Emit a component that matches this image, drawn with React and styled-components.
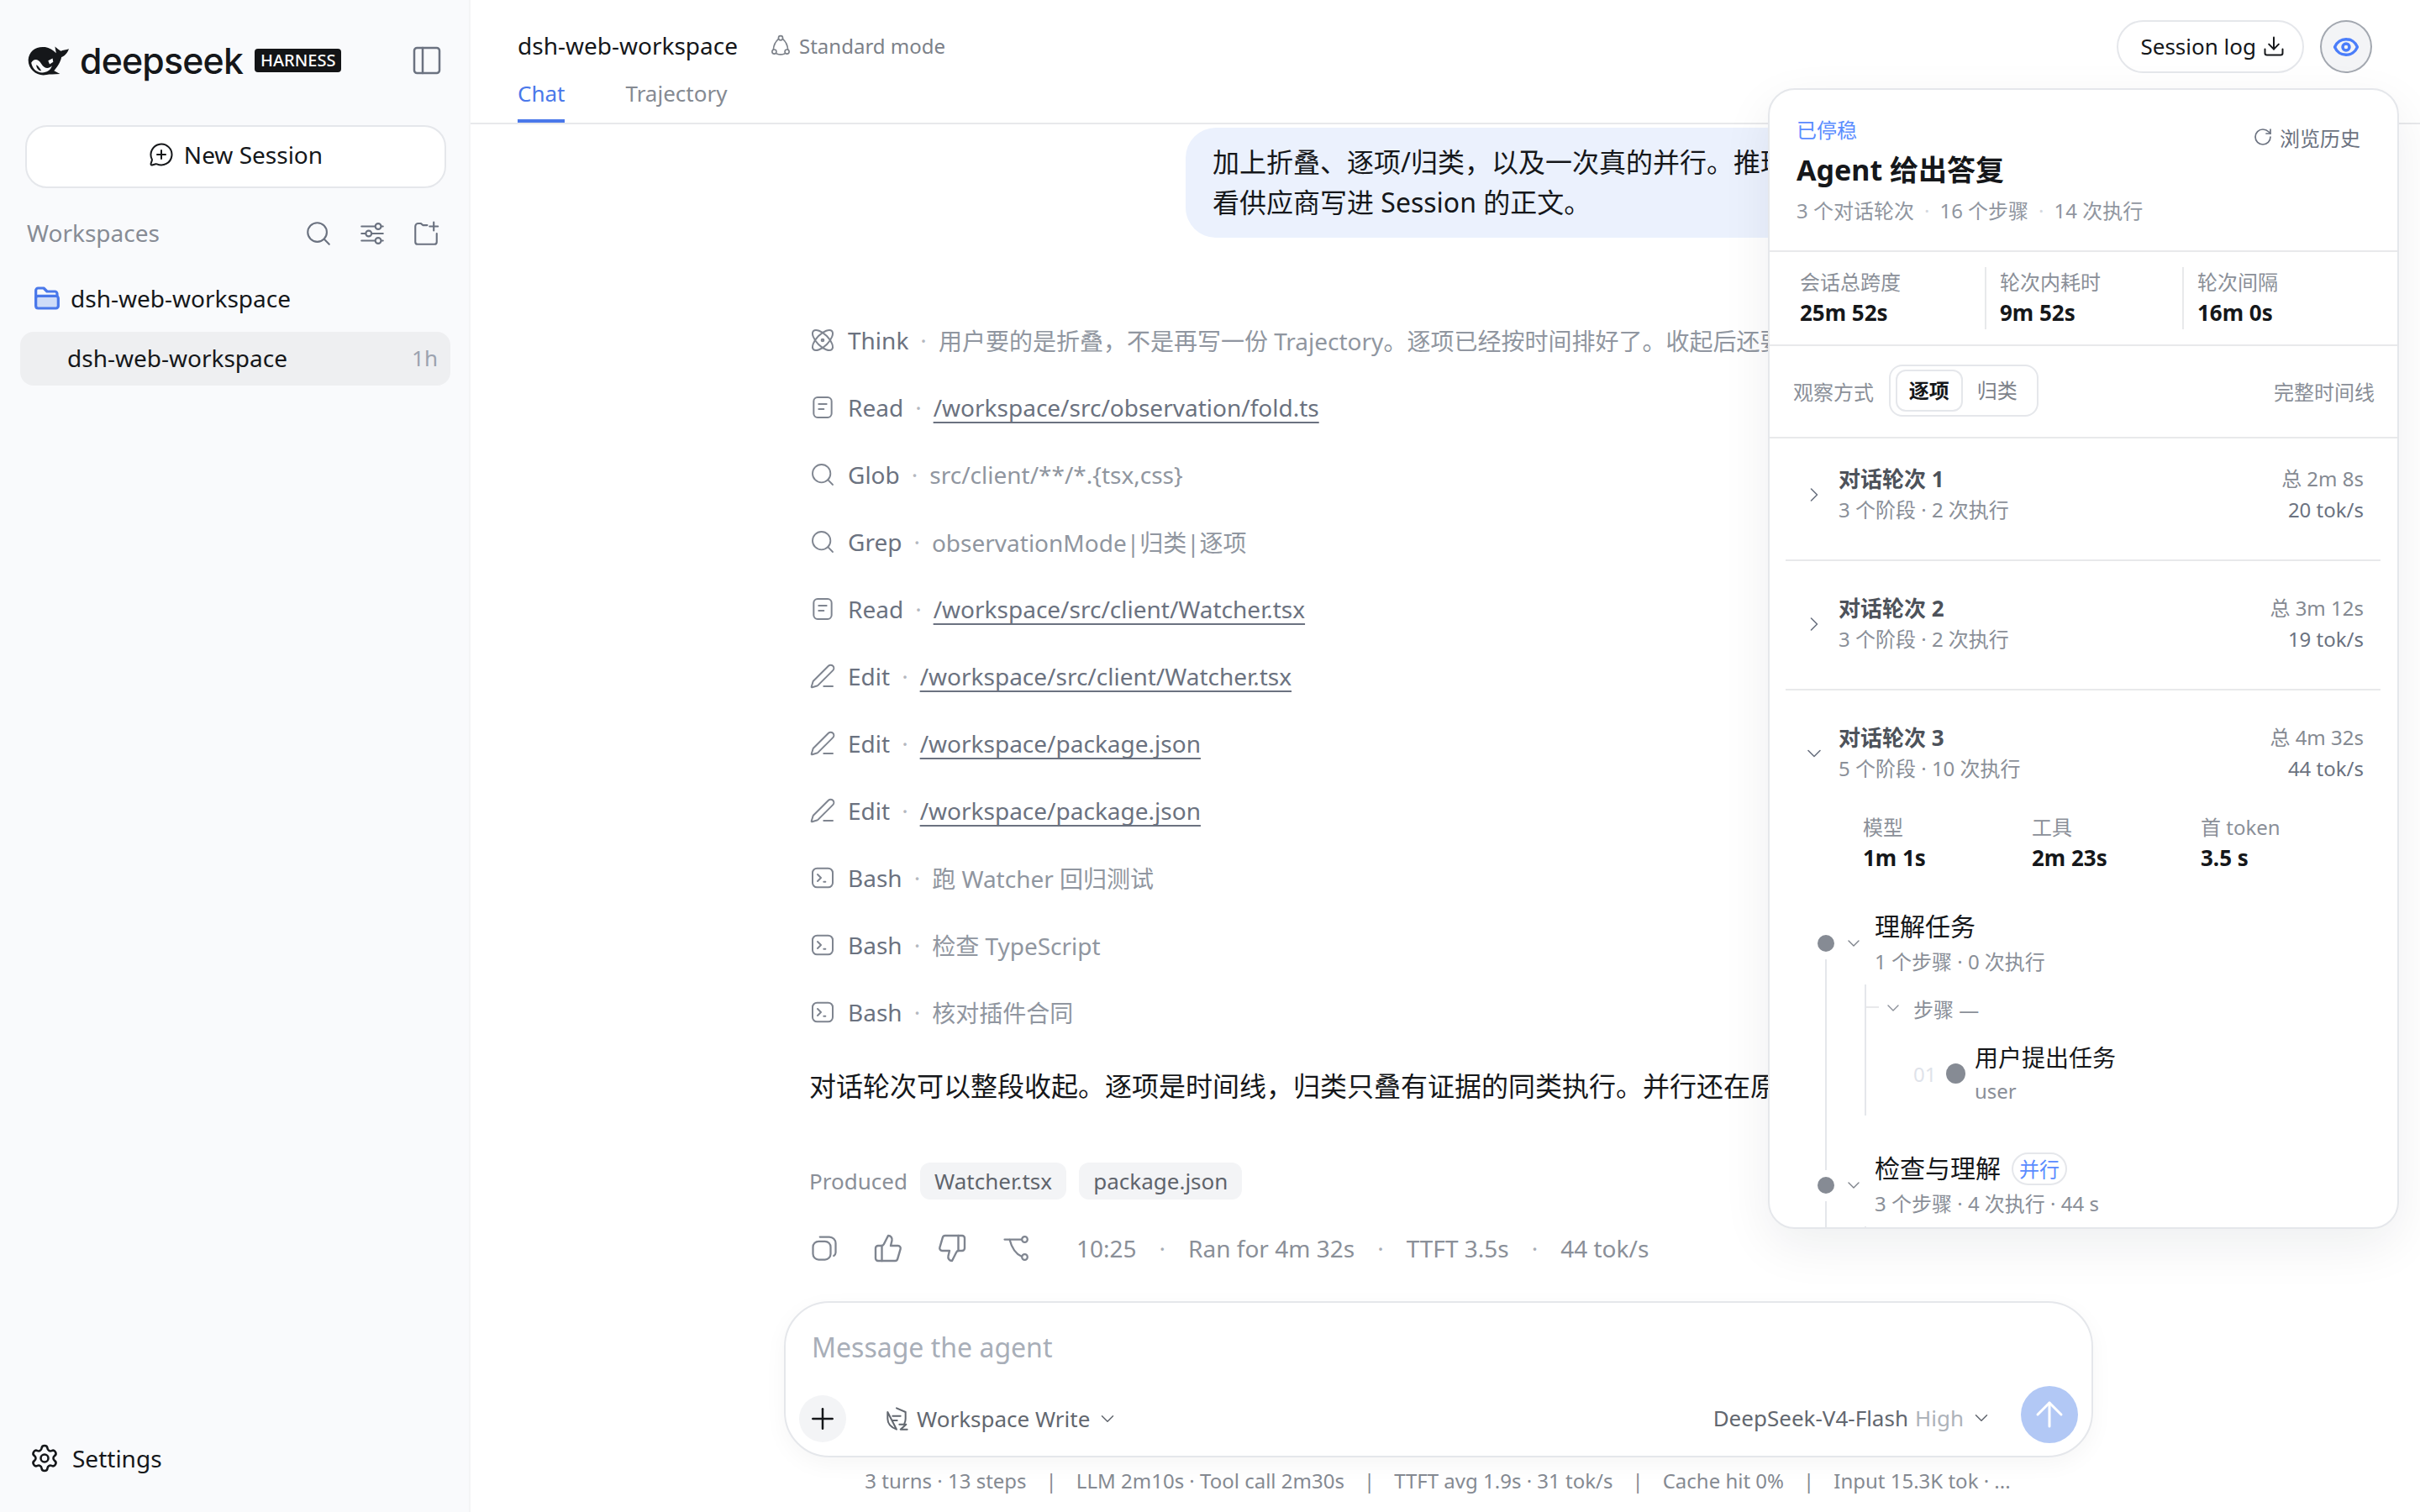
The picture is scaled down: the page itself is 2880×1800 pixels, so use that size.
import React from "react";
import styled, { createGlobalStyle } from "styled-components";
import {
  ArrowUp,
  Atom,
  ChevronDown,
  ChevronRight,
  Download,
  Eye,
  MessageCirclePlus,
  PanelLeft,
  PenLine,
  Plus,
  RotateCw,
  Search,
  Settings,
  ThumbsDown,
  ThumbsUp,
} from "lucide-react";

const GlobalStyle = createGlobalStyle`
  html, body {
    margin: 0;
    padding: 0;
    background: #fff;
    overflow: hidden;
  }
  body {
    font-family: "Noto Sans", "Noto Sans CJK SC", sans-serif;
    color: #15171a;
  }
  * {
    box-sizing: border-box;
  }
`;

const Shell = styled.div`
  zoom: 2;
  position: relative;
  display: flex;
  width: 1440px;
  height: 900px;
  overflow: hidden;
  background: #fff;
`;

/* sidebar */
const Sidebar = styled.aside`
  display: flex;
  flex-direction: column;
  width: 280px;
  flex-shrink: 0;
  padding: 0 11px 0 12px;
  background: #f9fafc;
  border-right: 1px solid #f4f5f6;
`;

const Brand = styled.div`
  display: flex;
  align-items: center;
  height: 72px;
  padding: 0 4px;
`;

const Wordmark = styled.span`
  margin-left: 5.5px;
  font-family: "Inter", sans-serif;
  font-size: 21.4px;
  font-weight: 500;
  letter-spacing: -0.4px;
  color: #15171a;
`;

const Badge = styled.span`
  margin-left: 7px;
  padding: 0 3.5px;
  height: 14px;
  line-height: 14px;
  border-radius: 2px;
  background: #131416;
  color: #fff;
  font-size: 10px;
  font-weight: 500;
`;

const ToggleButton = styled.span`
  display: flex;
  margin-left: auto;
  color: #6b7280;
`;

const NewSession = styled.div`
  display: flex;
  align-items: center;
  justify-content: center;
  gap: 6px;
  height: 37.5px;
  margin: 2.5px 2.5px 0 3px;
  padding-bottom: 3px;
  background: #fff;
  border: 1px solid #e5e7eb;
  border-radius: 13px;
  font-size: 14px;
  color: #15171a;
`;

const WorkspaceHead = styled.div`
  display: flex;
  align-items: center;
  height: 24px;
  margin-top: 14.5px;
  padding: 0 4px;
  font-size: 14px;
  color: #878c95;
`;

const HeadIcons = styled.div`
  display: flex;
  gap: 15px;
  margin-left: auto;
  margin-right: 2px;
  margin-top: 1px;
  color: #6b7280;
`;

const FolderRow = styled.div`
  display: flex;
  align-items: center;
  gap: 6px;
  height: 30px;
  margin-top: 12.2px;
  padding-left: 8px;
  font-size: 14px;
`;

const SessionRow = styled.div`
  display: flex;
  align-items: center;
  justify-content: space-between;
  height: 32px;
  margin-top: 5px;
  padding: 0 7.5px 1px 28px;
  background: #eeeff1;
  border-radius: 8px;
  font-size: 14px;
  color: #15171a;
`;

const Age = styled.span`
  font-size: 13px;
  color: #9ca3af;
`;

const SettingsRow = styled.div`
  display: flex;
  align-items: center;
  gap: 7.5px;
  margin-top: auto;
  margin-bottom: 20px;
  padding-left: 5.5px;
  height: 24px;
  font-size: 14px;
`;

/* main column */
const Main = styled.main`
  flex: 1;
  display: flex;
  flex-direction: column;
  min-width: 0;
`;

const Header = styled.header`
  display: flex;
  justify-content: space-between;
  flex-shrink: 0;
  height: 74px;
  padding: 0 28.5px 0 28px;
  border-bottom: 1px solid #e8e9eb;
`;

const HeaderInfo = styled.div`
  display: flex;
  flex-direction: column;
  padding-top: 16px;
`;

const TitleRow = styled.div`
  display: flex;
  align-items: center;
  height: 23px;
  font-size: 14px;
`;

const ModeTag = styled.span`
  display: flex;
  align-items: center;
  gap: 4px;
  margin-left: 18.5px;
  font-size: 12px;
  color: #7c8189;
`;

const Tabs = styled.div`
  display: flex;
  gap: 36px;
  margin-top: 7.5px;
`;

const Tab = styled.span`
  height: 27.5px;
  line-height: 20px;
  font-size: 13px;
  color: ${({ $active }) => ($active ? "#4a78ea" : "#858a92")};
  border-bottom: 2px solid ${({ $active }) => ($active ? "#4a78ea" : "transparent")};
`;

const HeaderActions = styled.div`
  display: flex;
  gap: 9.5px;
  padding-top: 12px;
`;

const LogButton = styled.div`
  display: flex;
  align-items: center;
  gap: 3.5px;
  height: 31.5px;
  padding: 0 10px 1px 13px;
  background: #fff;
  border: 1px solid #e5e7eb;
  border-radius: 16px;
  font-size: 13px;
`;

const EyeButton = styled.div`
  display: flex;
  align-items: center;
  justify-content: center;
  width: 31px;
  height: 31.5px;
  background: #f3f4f6;
  border: 1px solid #a3a8b0;
  border-radius: 50%;
  color: #4a7dfa;
`;

const Messages = styled.div`
  flex: 1;
  min-height: 0;
  overflow: hidden;
  padding-right: 8px;
`;

const Column = styled.div`
  display: flex;
  flex-direction: column;
  width: 779px;
  margin: 0 auto;
  padding: 2px 15px 0;
`;

const Bubble = styled.div`
  align-self: flex-end;
  width: 525px;
  padding: 8.5px 16px 9px;
  background: #ebf1fd;
  border-radius: 18px;
  font-size: 16px;
  line-height: 24px;
  white-space: nowrap;
  overflow: hidden;
`;

const Activity = styled.div`
  display: flex;
  flex-direction: column;
  margin-top: 41px;
`;

const ActivityRow = styled.div`
  display: flex;
  align-items: center;
  height: 40px;
  font-size: 14px;
  white-space: nowrap;
  color: #6b7280;
`;

const RowIcon = styled.span`
  display: flex;
  width: 16px;
  margin-right: 7px;
  color: #7f8590;
`;

const Dot = styled.span`
  margin: 0 7px;
  color: #b4b8bf;
`;

const FileLink = styled.span`
  color: #6b7280;
  text-decoration: underline;
  text-decoration-skip-ink: none;
  text-underline-offset: 3px;
  text-decoration-thickness: 1px;
`;

const Detail = styled.span`
  color: #9096a0;
`;

const Summary = styled.p`
  margin: 12px 0 0;
  font-size: 16px;
  line-height: 24px;
  white-space: nowrap;
`;

const Produced = styled.div`
  display: flex;
  align-items: center;
  gap: 7.6px;
  margin-top: 33.5px;
  font-size: 13px;
  color: #8a8f98;
`;

const Chip = styled.span`
  height: 22px;
  line-height: 22px;
  padding: 0 8.5px;
  background: #f3f4f6;
  border-radius: 6px;
  font-size: 13px;
  color: #5f646c;
`;

const Actions = styled.div`
  display: flex;
  align-items: center;
  height: 24px;
  margin-top: 17px;
  font-size: 14px;
  color: #8a8f98;
`;

const ActionIcons = styled.div`
  display: flex;
  gap: 20px;
  margin-right: 27px;
  color: #7f8590;
`;

const Sep = styled.span`
  margin: 0 13.5px;
  color: #a8adb5;
`;

const Composer = styled.div`
  flex-shrink: 0;
  display: flex;
  flex-direction: column;
  width: 779px;
  height: 93px;
  margin: 0 auto;
  transform: translateX(-4px);
  padding: 15.5px 8px 7.5px;
  background: #fff;
  border: 1px solid #e5e7eb;
  border-radius: 27px;
  box-shadow: 0 4px 14px rgba(0, 0, 0, 0.04);
`;

const Placeholder = styled.div`
  padding-left: 7.5px;
  font-size: 16px;
  line-height: 22px;
  color: #a8aeb8;
`;

const ComposerRow = styled.div`
  display: flex;
  align-items: flex-end;
  justify-content: space-between;
  margin-top: auto;
`;

const ComposerLeft = styled.div`
  display: flex;
  align-items: center;
  gap: 22px;
  margin-bottom: 0.5px;
`;

const PlusButton = styled.span`
  display: flex;
  align-items: center;
  justify-content: center;
  width: 28px;
  height: 28px;
  background: #f3f4f6;
  border-radius: 50%;
  color: #15171a;
`;

const Picker = styled.span`
  display: flex;
  align-items: center;
  gap: 4px;
  font-size: 13px;
  color: #62676f;
`;

const ComposerRight = styled.div`
  display: flex;
  align-items: center;
  gap: 17px;
`;

const ModelPicker = styled(Picker)`
  margin-top: 4px;
`;

const Faint = styled.span`
  color: #aeb3ba;
`;

const SendButton = styled.span`
  display: flex;
  align-items: center;
  justify-content: center;
  width: 34px;
  height: 34px;
  background: #b2c8f5;
  border-radius: 50%;
  color: #fff;
`;

const FooterStats = styled.div`
  flex-shrink: 0;
  display: flex;
  justify-content: center;
  align-items: center;
  height: 32.5px;
  padding: 0 9px 5.5px 0;
  font-size: 12px;
  color: #858a92;
  white-space: nowrap;
`;

const Bar = styled.span`
  margin: 0 11.5px;
`;

/* observation panel, floats above the chat */
const Panel = styled.section`
  position: absolute;
  top: 52.5px;
  right: 12.5px;
  width: 375.5px;
  height: 679px;
  overflow: hidden;
  background: #fff;
  border: 1px solid #e5e7eb;
  border-radius: 16px;
  box-shadow: 0 10px 30px rgba(17, 24, 39, 0.07);
`;

const PanelHead = styled.div`
  display: flex;
  justify-content: space-between;
  height: 96.5px;
  padding: 15px 22px 0 16px;
  border-bottom: 1px solid #e8e9eb;
`;

const Status = styled.div`
  font-size: 12px;
  line-height: 18px;
  color: #5b8cff;
`;

const PanelTitle = styled.h2`
  margin: 2.5px 0 0;
  font-size: 17px;
  line-height: 24px;
  font-weight: 700;
`;

const PanelSub = styled.div`
  margin-top: 3.5px;
  font-size: 12px;
  line-height: 18px;
  color: #9096a0;
`;

const SubDot = styled.span`
  margin: 0 6px;
  color: #d4d8de;
`;

const HistoryLink = styled.span`
  display: flex;
  align-items: center;
  gap: 4px;
  height: 18px;
  margin-top: 4px;
  font-size: 12px;
  color: #6b7280;
`;

const StatGrid = styled.div`
  display: grid;
  grid-template-columns: 128px 117.5px 1fr;
  height: 56px;
  padding-top: 9px;
  border-bottom: 1px solid #e8e9eb;
`;

const Stat = styled.div`
  height: 37px;
  padding-left: ${({ $first }) => ($first ? 18 : 8)}px;
  border-left: ${({ $first }) => ($first ? "none" : "1px solid #e8e9eb")};
`;

const Label = styled.div`
  font-size: 12px;
  line-height: 18px;
  color: #8a8f98;
`;

const Value = styled.div`
  font-size: 13px;
  line-height: 18px;
  font-weight: 700;
  color: #15171a;
`;

const ModeRow = styled.div`
  display: flex;
  align-items: center;
  justify-content: space-between;
  height: 55px;
  padding: 0 13.5px 1px 14px;
  border-bottom: 1px solid #e8e9eb;
  font-size: 12px;
  color: #8a8f98;
`;

const ModeLeft = styled.div`
  display: flex;
  align-items: center;
  gap: 9px;
`;

const Segments = styled.div`
  display: flex;
  align-items: center;
  width: 89px;
  height: 31px;
  padding: 0 3px;
  border: 1px solid #e5e7eb;
  border-radius: 8px;
`;

const Segment = styled.span`
  width: ${({ $active }) => ($active ? 40.5 : 42)}px;
  height: 25px;
  line-height: 23px;
  text-align: center;
  border-radius: 6px;
  border: 1px solid ${({ $active }) => ($active ? "#e5e7eb" : "transparent")};
  font-weight: ${({ $active }) => ($active ? 700 : 400)};
  color: ${({ $active }) => ($active ? "#15171a" : "#7c8189")};
`;

const Turns = styled.div`
  padding: 0 10px 0 9.5px;
`;

const TurnHead = styled.div`
  display: flex;
  align-items: center;
  padding: 19px 10px ${({ $open }) => ($open ? 0 : 20.5)}px 10px;
  color: #6b7280;
`;

const Turn = styled.div`
  border-bottom: ${({ $open }) => ($open ? "none" : "1px solid #e8e9eb")};

  &:first-child ${TurnHead} {
    padding-top: 15px;
  }
`;

const TurnText = styled.div`
  flex: 1;
  margin-left: 7.5px;
`;

const TurnTitle = styled.div`
  font-size: 13px;
  line-height: 18px;
  font-weight: 700;
  color: #4d525a;
`;

const TurnSub = styled.div`
  margin-top: 0.5px;
  font-size: 12px;
  line-height: 18px;
  color: #8a8f98;
`;

const TurnStats = styled.div`
  text-align: right;
  font-size: 12px;
  line-height: 18px;
  color: #6b7280;
`;

const TurnTotal = styled.div`
  color: #858a92;
  margin-bottom: 0.5px;
`;

const Metrics = styled.div`
  display: grid;
  grid-template-columns: repeat(3, 100.5px);
  margin-top: 17px;
  padding-left: 46px;
`;

const Stages = styled.div`
  margin-top: 22px;
`;

const Stage = styled.div`
  position: relative;
  padding-bottom: 21.5px;

  &::before {
    content: "";
    position: absolute;
    left: 23.5px;
    top: 29.5px;
    bottom: -11px;
    width: 1px;
    background: #e5e7eb;
  }
`;

const StageHead = styled.div`
  display: flex;
  align-items: center;
  padding-left: 19px;
  color: #7c8189;
`;

const StageDot = styled.span`
  width: 10px;
  height: 10px;
  margin-right: 5.5px;
  border-radius: 50%;
  background: #868b94;
`;

const StageText = styled.div`
  margin-left: 6.5px;
`;

const StageTitle = styled.div`
  display: flex;
  align-items: center;
  gap: 6.5px;
  height: 20px;
  font-size: 15px;
  line-height: 20px;
  color: #15171a;
`;

const StageSub = styled.div`
  margin-top: 2px;
  font-size: 12px;
  line-height: 18px;
  color: #8a8f98;
`;

const ParallelPill = styled.span`
  width: 33px;
  height: 19.5px;
  line-height: 17.5px;
  text-align: center;
  border: 1px solid #e5e7eb;
  border-radius: 10px;
  font-size: 12px;
  color: #5b8cff;
`;

const StageBody = styled.div`
  position: relative;
  margin: 4.5px 0 0 47px;
  height: 78px;
  padding-top: 5px;
  border-left: 1px solid #e5e7eb;

  &::before {
    content: "";
    position: absolute;
    left: 0;
    top: 13px;
    width: 7.5px;
    height: 1px;
    background: #e8e9eb;
  }
`;

const StepGroup = styled.div`
  display: flex;
  align-items: center;
  gap: 6px;
  height: 18px;
  padding-left: 10px;
  font-size: 12px;
  color: #8a8f98;
`;

const Step = styled.div`
  display: flex;
  align-items: center;
  margin-top: 10.5px;
  padding-left: 28px;
`;

const StepIndex = styled.span`
  width: 11px;
  font-size: 12px;
  color: #dfe3ea;
`;

const StepDot = styled.span`
  width: 11.5px;
  height: 12px;
  margin: 0 5.5px 0 8.5px;
  border-radius: 50%;
  background: #868b94;
`;

const StepTitle = styled.div`
  font-size: 14px;
  line-height: 20px;
`;

const StepSub = styled.div`
  margin-top: 1px;
  font-size: 12px;
  line-height: 18px;
  color: #8a8f98;
`;

const WhaleLogo = () => (
  <svg width="26" height="18" viewBox="24 26 146 102" fill="#15171a">
    <path d="M28 75C30 45 55 28 85 32C100 34 110 42 122 52L118 30C125 35 132 42 138 45C145 42 155 42 165 38C160 52 150 62 140 66C136 85 125 100 115 112L135 122C115 124 100 122 90 125C60 132 28 110 28 75Z" />
    <path fill="#f9fafc" d="M38 85C45 70 62 70 72 88C82 104 95 108 108 95C104 110 90 118 75 118C55 118 42 105 38 85Z" />
    <path d="M55 92C62 95 70 108 72 112C62 112 55 102 55 92Z" />
    <path fill="#f9fafc" d="M95 78L110 70L112 82L100 90Z" />
  </svg>
);

const Outline = ({ size = 16, width = 1.5, children }) => (
  <svg
    width={size}
    height={size}
    viewBox="0 0 24 24"
    fill="none"
    stroke="currentColor"
    strokeWidth={width}
    strokeLinecap="round"
    strokeLinejoin="round"
  >
    {children}
  </svg>
);

const SlidersIcon = () => (
  <Outline size={17}>
    <path d="M3 6h11M20 6h1M3 12h3M12 12h9M3 18h11M20 18h1" />
    <circle cx="17" cy="6" r="2.4" />
    <circle cx="9" cy="12" r="2.4" />
    <circle cx="17" cy="18" r="2.4" />
  </Outline>
);

const FolderAddIcon = () => (
  <Outline size={17}>
    <path d="M13 5H9.5L7.5 3.5H5.5A2.5 2.5 0 0 0 3 6v13a2 2 0 0 0 2 2h14a2 2 0 0 0 2-2v-7" />
    <path d="M18.5 2.5v7M15 6h7" />
  </Outline>
);

const BlueFolder = () => (
  <svg width="16" height="15" viewBox="0 0 24 22" fill="none" stroke="#4a78ea" strokeWidth="2.4" strokeLinejoin="round">
    <path d="M2 18V4a2 2 0 0 1 2-2h5l3 3h7a2 2 0 0 1 2 2v2" />
    <path fill="#cfdcf8" d="M2 18c0 1.2.8 2 2 2h16a2 2 0 0 0 2-2v-7a2 2 0 0 0-2-2H4a2 2 0 0 0-2 2z" />
  </svg>
);

const ModeIcon = () => (
  <Outline size={14} width={1.4}>
    <circle cx="12" cy="4.5" r="2.2" />
    <circle cx="5.5" cy="18.5" r="2.2" />
    <circle cx="18.5" cy="18.5" r="2.2" />
    <path d="M9.8 5.5C7 8 5 11 4.6 16.3M14.2 5.5C17 8 19 11 19.4 16.3M8 20.5c2.6 1 5.4 1 8 0" />
  </Outline>
);

const ReadIcon = () => (
  <Outline>
    <rect x="4" y="3" width="16" height="18" rx="3.5" />
    <path d="M8.5 9h7M8.5 13.5h4.5" />
  </Outline>
);

const BashIcon = () => (
  <Outline>
    <rect x="3" y="3.5" width="18" height="17" rx="4" />
    <path d="M7.5 9l3 3-3 3M13 15.5h1.5" />
  </Outline>
);

const CopyIcon = () => (
  <Outline size={18}>
    <rect x="3" y="6.5" width="14" height="14.5" rx="4.5" />
    <path d="M8.5 3h7.5a5 5 0 0 1 5 5v7.5a3 3 0 0 1-1.5 2.5" />
  </Outline>
);

const BranchIcon = () => (
  <Outline size={18}>
    <path d="M3 5h13.5M7 5c1.5 6 4 11 9.5 13.5" />
    <circle cx="19" cy="5" r="2.2" />
    <circle cx="19" cy="19" r="2.2" />
  </Outline>
);

const ShieldIcon = () => (
  <Outline size={16} width={1.5}>
    <path d="M12 2.5l8 3.5v6c0 1.6-.4 3-1 4.2M12 21.5C7 19.6 4 16.5 4 12V6z" />
    <path d="M8.5 9.5h7M8.5 13.5h4M14.5 17h6l-5 4.5h6" />
  </Outline>
);

const ACTIVITY = [
  { icon: <Atom size={16} strokeWidth={1.5} />, name: "Think", detail: "用户要的是折叠，不是再写一份 Trajectory。逐项已经按时间排好了。收起后还要保留每个阶段的统计。" },
  { icon: <ReadIcon />, name: "Read", link: "/workspace/src/observation/fold.ts" },
  { icon: <Search size={17} strokeWidth={1.4} />, name: "Glob", detail: "src/client/**/*.{tsx,css}" },
  { icon: <Search size={17} strokeWidth={1.4} />, name: "Grep", detail: "observationMode|归类|逐项" },
  { icon: <ReadIcon />, name: "Read", link: "/workspace/src/client/Watcher.tsx" },
  { icon: <PenLine size={16} strokeWidth={1.5} />, name: "Edit", link: "/workspace/src/client/Watcher.tsx" },
  { icon: <PenLine size={16} strokeWidth={1.5} />, name: "Edit", link: "/workspace/package.json" },
  { icon: <PenLine size={16} strokeWidth={1.5} />, name: "Edit", link: "/workspace/package.json" },
  { icon: <BashIcon />, name: "Bash", detail: "跑 Watcher 回归测试" },
  { icon: <BashIcon />, name: "Bash", detail: "检查 TypeScript" },
  { icon: <BashIcon />, name: "Bash", detail: "核对插件合同" },
];

const TURNS = [
  { title: "对话轮次 1", sub: "3 个阶段 · 2 次执行", total: "总 2m 8s", rate: "20 tok/s" },
  { title: "对话轮次 2", sub: "3 个阶段 · 2 次执行", total: "总 3m 12s", rate: "19 tok/s" },
];

const TurnHeader = ({ turn, open }) => (
  <TurnHead $open={open}>
    {open ? <ChevronDown size={14} strokeWidth={1.4} /> : <ChevronRight size={14} strokeWidth={1.4} />}
    <TurnText>
      <TurnTitle>{turn.title}</TurnTitle>
      <TurnSub>{turn.sub}</TurnSub>
    </TurnText>
    <TurnStats>
      <TurnTotal>{turn.total}</TurnTotal>
      <div>{turn.rate}</div>
    </TurnStats>
  </TurnHead>
);

const ObservationPanel = () => (
  <Panel>
    <PanelHead>
      <div>
        <Status>已停稳</Status>
        <PanelTitle>Agent 给出答复</PanelTitle>
        <PanelSub>
          3 个对话轮次<SubDot>·</SubDot>16 个步骤<SubDot>·</SubDot>14 次执行
        </PanelSub>
      </div>
      <HistoryLink>
        <RotateCw size={12} strokeWidth={1.7} />
        浏览历史
      </HistoryLink>
    </PanelHead>
    <StatGrid>
      <Stat $first>
        <Label>会话总跨度</Label>
        <Value>25m 52s</Value>
      </Stat>
      <Stat>
        <Label>轮次内耗时</Label>
        <Value>9m 52s</Value>
      </Stat>
      <Stat>
        <Label>轮次间隔</Label>
        <Value>16m 0s</Value>
      </Stat>
    </StatGrid>
    <ModeRow>
      <ModeLeft>
        观察方式
        <Segments>
          <Segment $active>逐项</Segment>
          <Segment>归类</Segment>
        </Segments>
      </ModeLeft>
      完整时间线
    </ModeRow>
    <Turns>
      {TURNS.map((turn) => (
        <Turn key={turn.title}>
          <TurnHeader turn={turn} />
        </Turn>
      ))}
      <Turn $open>
        <TurnHeader
          open
          turn={{ title: "对话轮次 3", sub: "5 个阶段 · 10 次执行", total: "总 4m 32s", rate: "44 tok/s" }}
        />
        <Metrics>
          <div>
            <Label>模型</Label>
            <Value>1m 1s</Value>
          </div>
          <div>
            <Label>工具</Label>
            <Value>2m 23s</Value>
          </div>
          <div>
            <Label>首 token</Label>
            <Value>3.5 s</Value>
          </div>
        </Metrics>
        <Stages>
          <Stage>
            <StageHead>
              <StageDot />
              <ChevronDown size={12} strokeWidth={1.4} />
              <StageText>
                <StageTitle>理解任务</StageTitle>
                <StageSub>1 个步骤 · 0 次执行</StageSub>
              </StageText>
            </StageHead>
            <StageBody>
              <StepGroup>
                <ChevronDown size={12} strokeWidth={1.4} />
                步骤 —
              </StepGroup>
              <Step>
                <StepIndex>01</StepIndex>
                <StepDot />
                <div>
                  <StepTitle>用户提出任务</StepTitle>
                  <StepSub>user</StepSub>
                </div>
              </Step>
            </StageBody>
          </Stage>
          <Stage>
            <StageHead>
              <StageDot />
              <ChevronDown size={12} strokeWidth={1.4} />
              <StageText>
                <StageTitle>
                  检查与理解
                  <ParallelPill>并行</ParallelPill>
                </StageTitle>
                <StageSub>3 个步骤 · 4 次执行 · 44 s</StageSub>
              </StageText>
            </StageHead>
            <StageBody />
          </Stage>
        </Stages>
      </Turn>
    </Turns>
  </Panel>
);

const App = () => (
  <Shell>
    <GlobalStyle />
    <Sidebar>
      <Brand>
        <WhaleLogo />
        <Wordmark>deepseek</Wordmark>
        <Badge>HARNESS</Badge>
        <ToggleButton>
          <PanelLeft size={20} strokeWidth={1.5} />
        </ToggleButton>
      </Brand>
      <NewSession>
        <MessageCirclePlus size={15} strokeWidth={1.6} />
        New Session
      </NewSession>
      <WorkspaceHead>
        Workspaces
        <HeadIcons>
          <Search size={17} strokeWidth={1.5} />
          <SlidersIcon />
          <FolderAddIcon />
        </HeadIcons>
      </WorkspaceHead>
      <FolderRow>
        <BlueFolder />
        dsh-web-workspace
      </FolderRow>
      <SessionRow>
        dsh-web-workspace
        <Age>1h</Age>
      </SessionRow>
      <SettingsRow>
        <Settings size={18} strokeWidth={1.7} />
        Settings
      </SettingsRow>
    </Sidebar>

    <Main>
      <Header>
        <HeaderInfo>
          <TitleRow>
            dsh-web-workspace
            <ModeTag>
              <ModeIcon />
              Standard mode
            </ModeTag>
          </TitleRow>
          <Tabs>
            <Tab $active>Chat</Tab>
            <Tab>Trajectory</Tab>
          </Tabs>
        </HeaderInfo>
        <HeaderActions>
          <LogButton>
            Session log
            <Download size={14} strokeWidth={1.7} />
          </LogButton>
          <EyeButton>
            <Eye size={16} strokeWidth={2.6} />
          </EyeButton>
        </HeaderActions>
      </Header>

      <Messages>
        <Column>
          <Bubble>
            加上折叠、逐项/归类，以及一次真的并行。推理内容不要让人去
            <br />
            看供应商写进 Session 的正文。
          </Bubble>
          <Activity>
            {ACTIVITY.map((row, i) => (
              <ActivityRow key={i}>
                <RowIcon>{row.icon}</RowIcon>
                {row.name}
                <Dot>·</Dot>
                {row.link ? <FileLink>{row.link}</FileLink> : <Detail>{row.detail}</Detail>}
              </ActivityRow>
            ))}
          </Activity>
          <Summary>对话轮次可以整段收起。逐项是时间线，归类只叠有证据的同类执行。并行还在原来的位置，不会被拆开。</Summary>
          <Produced>
            Produced
            <Chip>Watcher.tsx</Chip>
            <Chip>package.json</Chip>
          </Produced>
          <Actions>
            <ActionIcons>
              <CopyIcon />
              <ThumbsUp size={18} strokeWidth={1.6} />
              <ThumbsDown size={18} strokeWidth={1.6} />
              <BranchIcon />
            </ActionIcons>
            10:25
            <Sep>·</Sep>
            Ran for 4m 32s
            <Sep>·</Sep>
            TTFT 3.5s
            <Sep>·</Sep>
            44 tok/s
          </Actions>
        </Column>
      </Messages>

      <Composer>
        <Placeholder>Message the agent</Placeholder>
        <ComposerRow>
          <ComposerLeft>
            <PlusButton>
              <Plus size={20} strokeWidth={1.5} />
            </PlusButton>
            <Picker>
              <ShieldIcon />
              Workspace Write
              <ChevronDown size={13} strokeWidth={1.4} />
            </Picker>
          </ComposerLeft>
          <ComposerRight>
            <ModelPicker>
              DeepSeek-V4-Flash <Faint>High</Faint>
              <ChevronDown size={13} strokeWidth={1.4} />
            </ModelPicker>
            <SendButton>
              <ArrowUp size={24} strokeWidth={1.5} />
            </SendButton>
          </ComposerRight>
        </ComposerRow>
      </Composer>

      <FooterStats>
        3 turns · 13 steps
        <Bar>|</Bar>
        LLM 2m10s · Tool call 2m30s
        <Bar>|</Bar>
        TTFT avg 1.9s · 31 tok/s
        <Bar>|</Bar>
        Cache hit 0%
        <Bar>|</Bar>
        Input 15.3K tok · ...
      </FooterStats>
    </Main>

    <ObservationPanel />
  </Shell>
);

export default App;
